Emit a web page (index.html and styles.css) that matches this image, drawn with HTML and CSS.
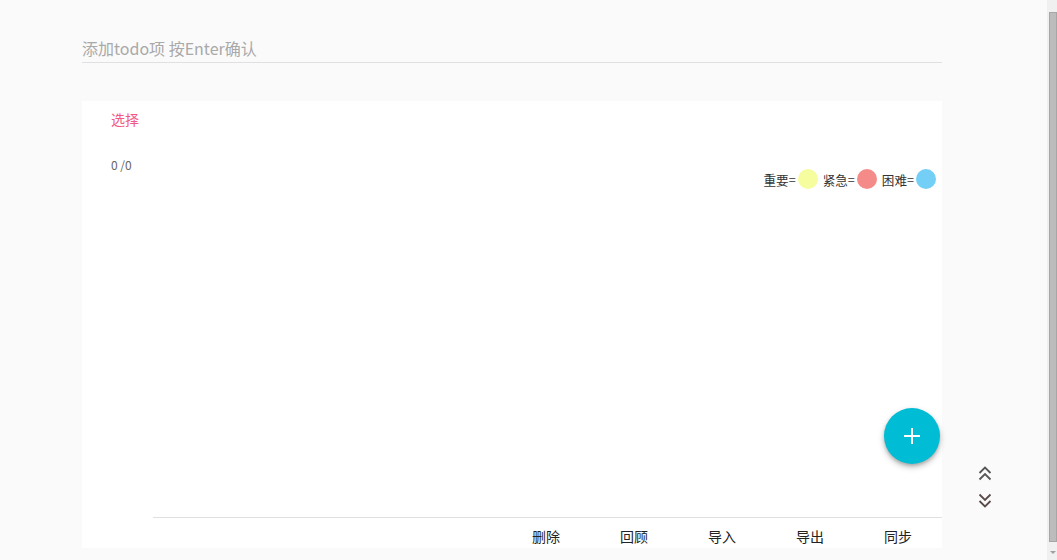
FILE: index.html
```html
<!DOCTYPE html>
<html lang="zh">
<head>
<meta charset="utf-8">
<title>Todo</title>
<link rel="stylesheet" href="styles.css">
</head>
<body>
<div class="viewport">
<div class="page">
  <div class="add">
    <input class="add-input" type="text" placeholder="添加todo项 按Enter确认">
  </div>
  <div class="card">
    <div class="side">
      <div class="select">选择</div>
      <div class="count">0 /0</div>
    </div>
    <div class="main">
      <div class="legend">
        <span class="legend-label">重要=</span><span class="dot dot-yellow"></span>
        <span class="legend-label">紧急=</span><span class="dot dot-red"></span>
        <span class="legend-label">困难=</span><span class="dot dot-blue"></span>
      </div>
      <div class="list"></div>
      <div class="footer">
        <span class="action">删除</span>
        <span class="action">回顾</span>
        <span class="action">导入</span>
        <span class="action">导出</span>
        <span class="action">同步</span>
      </div>
    </div>
    <div class="fab">
      <svg width="18" height="18" viewBox="0 0 18 18"><path d="M9 1v16M1 9h16" stroke="#fff" stroke-width="2" fill="none"/></svg>
    </div>
  </div>
  <div class="jump">
    <svg class="chev" width="16" height="16" viewBox="0 0 16 16"><path d="M2.5 8L8 2.5L13.5 8M2.5 14.5L8 9L13.5 14.5" stroke="#555" stroke-width="1.8" fill="none"/></svg>
    <svg class="chev" width="16" height="16" viewBox="0 0 16 16"><path d="M2.5 1.5L8 7L13.5 1.5M2.5 8L8 13.5L13.5 8" stroke="#5a4a4a" stroke-width="1.8" fill="none"/></svg>
  </div>
</div>
</div>
<div class="rail">
  <div class="rail-thumb"></div>
  <svg class="rail-arrow" width="8" height="6" viewBox="0 0 8 6"><path d="M1 1h6L4 4z" fill="#a0a0a0"/></svg>
</div>
</body>
</html>
```

FILE: styles.css
```css
html, body {
  margin: 0;
  padding: 0;
  background: #fafafa;
  height: 100%;
  overflow: hidden;
}

body {
  display: flex;
  font-family: "Noto Sans CJK SC", "Liberation Sans", sans-serif;
  color: #222;
}

.viewport {
  flex: 1;
  height: 100%;
  overflow: hidden;
}

.rail {
  width: 10px;
  flex: none;
  background: #f0f0f0;
  display: flex;
  flex-direction: column;
  align-items: flex-end;
  padding-top: 12px;
  box-sizing: border-box;
}
.rail-thumb {
  width: 8px;
  height: 530px;
  box-sizing: border-box;
  background: #bcbcbc;
  border: 1px solid #a6a6a6;
}
.rail-arrow {
  display: block;
  margin-top: 8px;
  margin-right: 0;
}

.page {
  position: relative;
  padding: 30px 0 19px 82px;
  width: 860px;
}

.add-input {
  display: block;
  box-sizing: border-box;
  width: 860px;
  height: 33px;
  padding: 3px 0 0;
  margin: 0;
  border: none;
  border-bottom: 1px solid #e0e0e0;
  background: transparent;
  font-family: "Noto Sans CJK SC", "Liberation Mono", monospace;
  font-size: 16px;
  color: #333;
  outline: none;
}
.add-input::placeholder {
  color: #a9a9a9;
}

.card {
  position: relative;
  margin-top: 38px;
  height: 447px;
  background: #fff;
  display: flex;
}

.side {
  width: 42px;
  padding: 8px 0 0 29px;
  flex: none;
}
.select {
  font-size: 14px;
  line-height: 20px;
  color: #f25a85;
}
.count {
  margin-top: 28px;
  font-size: 12px;
  line-height: 16px;
  color: #666;
}

.main {
  flex: 1;
  display: flex;
  flex-direction: column;
}

.legend {
  display: flex;
  justify-content: flex-end;
  align-items: center;
  margin-top: 68px;
  padding-right: 6px;
  height: 20px;
}
.legend-label {
  font-size: 12.6px;
  color: #333;
  margin: 0 2px 0 5px;
}
.dot {
  width: 20px;
  height: 20px;
  border-radius: 50%;
}
.dot-yellow { background: #f5fd9e; }
.dot-red { background: #f48b88; }
.dot-blue { background: #73cff5; }

.list {
  flex: 1;
}

.footer {
  border-top: 1px solid #e0e0e0;
  display: flex;
  justify-content: flex-end;
  padding: 8px 0 2px;
  height: 20px;
}
.action {
  width: 88px;
  text-align: center;
  font-size: 14px;
  line-height: 20px;
  color: #222;
}

.fab {
  position: absolute;
  right: 2px;
  bottom: 84px;
  width: 56px;
  height: 56px;
  border-radius: 50%;
  background: #00bcd4;
  box-shadow: 0 3px 6px rgba(0,0,0,0.25), 0 2px 3px rgba(0,0,0,0.15);
  display: flex;
  align-items: center;
  justify-content: center;
}

.jump {
  position: absolute;
  left: 977px;
  top: 465px;
  display: flex;
  flex-direction: column;
  gap: 12px;
}
.chev {
  display: block;
}
```
